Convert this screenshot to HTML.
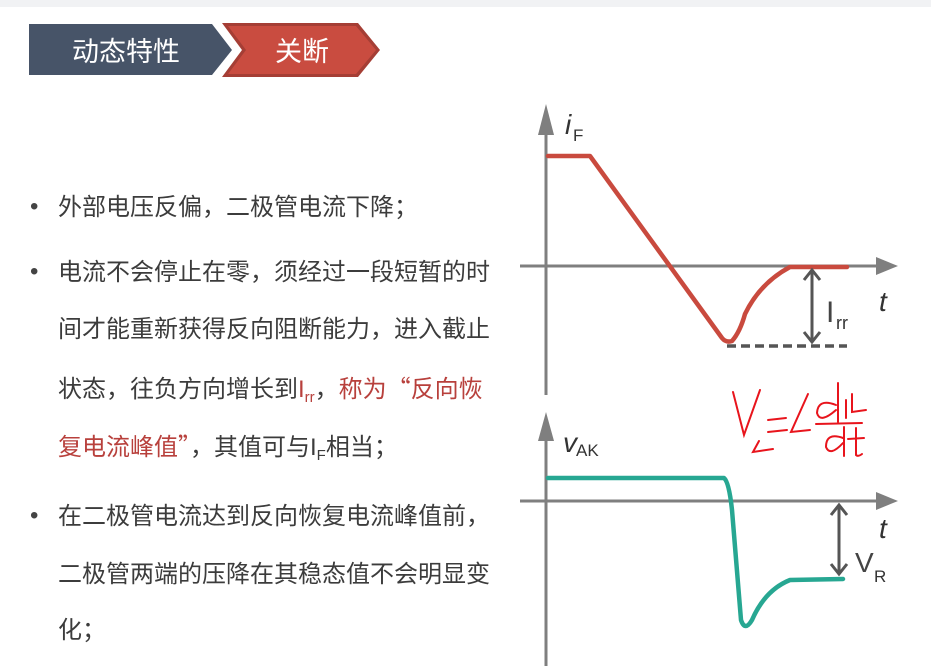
<!DOCTYPE html>
<html><head><meta charset="utf-8"><style>
body{margin:0;width:931px;height:669px;background:#fff;position:relative;overflow:hidden;font-family:"Liberation Sans","Noto Sans CJK SC",sans-serif;}
.top{position:absolute;left:0;top:0;width:931px;height:7px;background:#f1f2f4;}
.l{position:absolute;left:58px;font-size:24px;color:#3c3c3c;white-space:nowrap;line-height:30px;}
.b{position:absolute;left:30px;font-size:24px;color:#444;}
.r{color:#b8403c;}
.q{font-family:"Noto Sans CJK SC",sans-serif;}
sub{font-size:15px;vertical-align:-5px;}
</style></head><body>
<div class="top"></div>
<svg width="931" height="669" style="position:absolute;left:0;top:0">
<polygon points="29,24 212,24 232,50 212,75 29,75" fill="#475468"/>
<polygon points="222,23 358,23 380,50 358,77 222,77 242,50" fill="#a53e35"/>
<polygon points="228,26 356,26 376,50 356,74 228,74 246,50" fill="#c94c40"/>
<text x="126" y="61" font-size="27" fill="#fff" text-anchor="middle" font-family="Noto Sans CJK SC,sans-serif">动态特性</text>
<text x="302" y="61" font-size="27" fill="#fff" text-anchor="middle" font-family="Noto Sans CJK SC,sans-serif">关断</text>
<g stroke="#7f7f7f" stroke-width="3" fill="#7f7f7f">
<line x1="546" y1="125" x2="546" y2="395"/>
<polygon points="538,135 554,135 546,104" stroke="none"/>
<line x1="520" y1="266" x2="880" y2="266"/>
<polygon points="876,257 876,275 898,266" stroke="none"/>
<line x1="546" y1="430" x2="546" y2="666"/>
<polygon points="538,441 554,441 546,412" stroke="none"/>
<line x1="520" y1="501" x2="880" y2="501"/>
<polygon points="876,492 876,510 898,501" stroke="none"/>
</g>
<path d="M548,156 L590,156 L722,338 Q726,343 732,341 Q740,332 745,314 Q760,283 790,267 L847,267" stroke="#c94a3e" stroke-width="4.5" fill="none" stroke-linecap="round" stroke-linejoin="round"/>
<line x1="727" y1="346" x2="847" y2="346" stroke="#555" stroke-width="3.5" stroke-dasharray="9,5"/>
<g stroke="#555" stroke-width="3" fill="none">
<line x1="812" y1="270" x2="812" y2="342"/>
<polyline points="804,280 812,270 820,280"/><polyline points="804,332 812,342 820,332"/>
<line x1="839" y1="505" x2="839" y2="574"/>
<polyline points="831,515 839,505 847,515"/><polyline points="831,564 839,574 847,564"/>
</g>
<path d="M548,478 L724,478 Q729,482 732,510 L741,620 Q745,632 752,620 Q765,590 790,580 L843,579" stroke="#27a792" stroke-width="4.5" fill="none" stroke-linecap="round" stroke-linejoin="round"/>
<g font-family="Liberation Sans,sans-serif" fill="#333">
<text x="565" y="134" font-size="28" font-style="italic">i</text><text x="573" y="141" font-size="17">F</text>
<text x="826" y="322" font-size="30" fill="#444" transform="scale(1,1)">I</text><text x="836" y="329" font-size="18">rr</text>
<text x="879" y="311" font-size="28" font-style="italic">t</text>
<text x="563" y="452" font-size="28" font-style="italic">v</text><text x="576" y="456" font-size="17">AK</text>
<text x="879" y="538" font-size="28" font-style="italic">t</text>
<text x="855" y="572" font-size="28" fill="#444">V</text><text x="874" y="582" font-size="17">R</text>
</g>
<g stroke="#e8141c" stroke-width="2" fill="none" stroke-linecap="round">
<path d="M733,392 L744,435 L760,390"/>
<path d="M759,441 L753,452 L773,449"/>
<path d="M768,420 L786,418 M768,432 L787,430"/>
<path d="M808,394 L791,432 L810,430"/>
<path d="M836,405 Q818,398 817,413 Q820,424 836,410 M838,383 L838,422"/>
<path d="M846,400 L846,418"/>
<path d="M852,394 L852,412 L866,410"/>
<path d="M816,424 L862,423"/>
<path d="M843,438 Q826,432 826,447 Q830,457 843,443 M844,427 L844,456"/>
<path d="M856,428 L856,455 Q858,457 862,454 M848,439 L864,438"/>
</g>
</svg>
<div class="b" style="top:193px">•</div>
<div class="l" style="top:193px">外部电压反偏，二极管电流下降；</div>
<div class="b" style="top:258px">•</div>
<div class="l" style="top:258px">电流不会停止在零，须经过一段短暂的时</div>
<div class="l" style="top:315px">间才能重新获得反向阻断能力，进入截止</div>
<div class="l" style="top:372px">状态，往负方向增长到<span class="r">I<sub>rr</sub></span>，<span class="r">称为<span class="q">“</span>反向恢</span></div>
<div class="l" style="top:430px"><span class="r">复电流峰值<span class="q">”</span></span>，其值可与I<sub>F</sub>相当；</div>
<div class="b" style="top:502px">•</div>
<div class="l" style="top:502px">在二极管电流达到反向恢复电流峰值前，</div>
<div class="l" style="top:560px">二极管两端的压降在其稳态值不会明显变</div>
<div class="l" style="top:616px">化；</div>
</body></html>
